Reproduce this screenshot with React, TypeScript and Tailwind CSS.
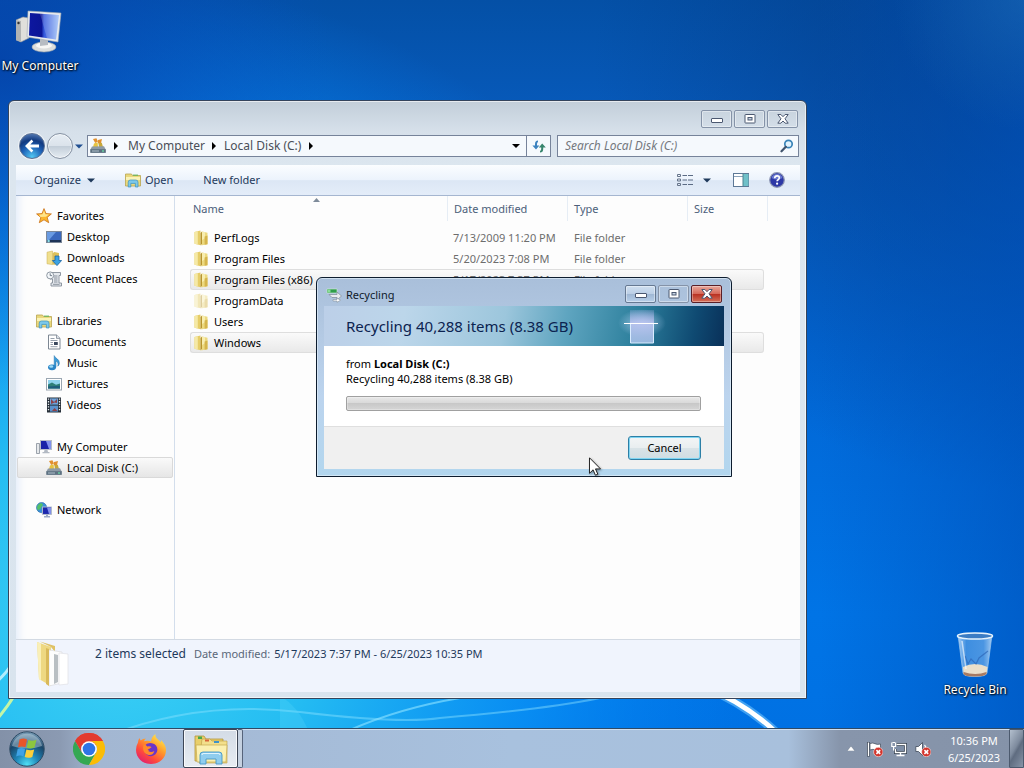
import React, { useState } from 'react';

type IconProps = { className?: string };

/* ---------- small icons (16px grid) ---------- */

const FolderIcon = ({ faded }: { faded?: boolean }) => (
    <svg viewBox="0 0 16 16" className={faded ? 'size-4 shrink-0 opacity-45' : 'size-4 shrink-0'} aria-hidden="true">
        <path d="M1.500 2 7.500 .6v14.600L1.500 13.800z" fill="#e6cd68" />
        <path d="M1.500 2 4.800 1.300v13.200l-3.300-.7z" fill="#f5e9a6" />
        <path d="M7.500 3 9 1.600v12.600l-1.500 1z" fill="#b8952f" />
        <path d="M9 1.600 14.500 2.800v11.400L9 15.200l-1.500 0 1.500-1z" fill="#ecd980" />
        <path d="M9 1.600 12 2.300v6L9 10z" fill="#f7edb0" />
        <path d="M11.600 6.400 14.500 5.400v8.800l-2.900.5z" fill="#d5b54c" />
    </svg>
);

const LibraryIcon = ({ className = 'size-4 shrink-0' }: IconProps) => (
    <svg viewBox="0 0 16 16" className={className} aria-hidden="true">
        <path d="M.5 2h6l1 1.500h8V14H.5z" fill="#e9d87c" stroke="#b9a450" strokeWidth=".8" />
        <path d="M1 5h14v3H1z" fill="#faf3b8" />
        <path d="M8 2.600h5v1.200H8z" fill="#6cb65a" />
        <path d="M3.200 15V10.200Q3.200 8 5.400 8h5.400Q13 8 13 10.200V15h-2.600v-3.600H5.800V15z" fill="#7cc8ea" stroke="#3a91c0" strokeWidth=".7" />
    </svg>
);

const StarIcon = () => (
    <svg viewBox="0 0 16 16" className="size-4 shrink-0" aria-hidden="true">
        <path d="m8 .6 2 5 5.400.3-4.200 3.500 1.500 5.300L8 11.800l-4.700 2.900 1.500-5.300L.6 5.900 6 5.600z" fill="#fbb62c" stroke="#c9711a" strokeWidth=".8" />
        <path d="m8 2.600 1.300 3.700 3.600.3-3 2.200-5.400.1L3 6.700l3.600-.4z" fill="#ffe48a" />
    </svg>
);

const DesktopIcon = () => (
    <svg viewBox="0 0 16 16" className="size-4 shrink-0" aria-hidden="true">
        <rect x=".5" y="2.500" width="15" height="11" fill="#3a68bd" stroke="#7b8798" />
        <path d="M1 3h9L3 11H1z" fill="#6a9be2" />
        <path d="M1 11h14v2H1z" fill="#1d3357" />
        <circle cx="2.600" cy="12" r="1.300" fill="#8ce0ea" />
    </svg>
);

const DownloadsIcon = () => (
    <svg viewBox="0 0 16 16" className="size-4 shrink-0" aria-hidden="true">
        <path d="M1 2.200 6.500 1v13.600L1 13.800z" fill="#f0df8e" stroke="#c8ac4e" strokeWidth=".5" />
        <path d="M6.500 3.200 8.400 2 13 3v11l-4.600.8-1.900-.2z" fill="#dcc05a" />
        <path d="M9 6h4v4.500h2.600L11 15.600l-4.600-5.100H9z" fill="#3ba2e3" stroke="#1b66a5" strokeWidth=".8" />
    </svg>
);

const RecentIcon = () => (
    <svg viewBox="0 0 16 16" className="size-4 shrink-0" aria-hidden="true">
        <path d="M4 1.500h10.500v3H13V12h2.500v3H5v-3h1.500V8H4z" fill="#e4e8ed" stroke="#848d98" strokeWidth=".9" />
        <path d="M8 5h3.500M8 7h3.500M8 9h3.500M8 11h3.500M7 13.300h6.500" stroke="#7f8994" strokeWidth=".9" />
        <circle cx="4.200" cy="4.400" r="3.500" fill="#f4f7fa" stroke="#838d99" strokeWidth=".9" />
        <path d="M4.200 2.300v2.300h1.900" fill="none" stroke="#566373" strokeWidth=".8" />
    </svg>
);

const DocumentsIcon = () => (
    <svg viewBox="0 0 16 16" className="size-4 shrink-0" aria-hidden="true">
        <path d="M2.500 1h8L14 4.400V15H2.500z" fill="#fff" stroke="#7d8793" />
        <path d="M10.500 1v3.400H14" fill="#dfe5ec" stroke="#7d8793" strokeWidth=".8" />
        <path d="M4.500 4.500h4M4.500 6.500h7M4.500 8.500H7M4.500 10.500H7M4.500 12.700h7" stroke="#8a95a3" strokeWidth=".9" />
        <path d="M8 8h3.800v3H8z" fill="#39475c" />
    </svg>
);

const MusicIcon = () => (
    <svg viewBox="0 0 16 16" className="size-4 shrink-0" aria-hidden="true">
        <path d="M8.200.6C9 3.400 13.600 4 13.400 8.200c-.1 1.400-.8 2.300-1.600 3 .8-2.600-.2-4.400-1.800-5.100v6.200H8.200z" fill="#3c9bd8" stroke="#2273ad" strokeWidth=".5" />
        <ellipse cx="6" cy="12.300" rx="4" ry="2.900" fill="#2a84c6" />
        <ellipse cx="5.200" cy="11.500" rx="2.100" ry="1.200" fill="#9edcf6" />
    </svg>
);

const PicturesIcon = () => (
    <svg viewBox="0 0 16 16" className="size-4 shrink-0" aria-hidden="true">
        <rect x=".5" y="2.500" width="15" height="11.500" fill="#fff" stroke="#9aa6b1" />
        <rect x="2" y="4" width="12" height="8.500" fill="#8fd3ee" />
        <path d="M2 8.400 6 6.600l4 2.200 4-1.400v5.100H2z" fill="#2f7f78" />
        <path d="M2 10.600 14 9.800v2.700H2z" fill="#1e5d7c" />
    </svg>
);

const VideosIcon = () => (
    <svg viewBox="0 0 16 16" className="size-4 shrink-0" aria-hidden="true">
        <rect x="1" y=".5" width="14" height="15" fill="#27303a" />
        <rect x="4" y="1.400" width="8" height="6.200" fill="#6da4dc" />
        <rect x="4" y="8.600" width="8" height="6" fill="#5b92cd" />
        <path d="m5 2 3 3 3-3v4L8.500 5.500 5 7zM6 14l2.500-3 3 3z" fill="#8d4248" />
        <path d="M2.500 1.500v13M13.500 1.500v13" stroke="#e9eef2" strokeWidth="1.300" strokeDasharray="1.300 1.300" />
    </svg>
);

const ComputerIcon = () => (
    <svg viewBox="0 0 16 16" className="size-4 shrink-0" aria-hidden="true">
        <path d="M.5 4.500h3v10h-3z" fill="#e6e9ec" stroke="#858e99" strokeWidth=".8" />
        <rect x="4.500" y="1.500" width="11" height="9" fill="#1822a8" stroke="#b6bdc8" />
        <path d="M10 2h5v8h-2z" fill="#8192ee" />
        <path d="M8.500 11h3l.5 2h1.500v1.300h-7V13H8z" fill="#b3bac4" />
    </svg>
);

const DriveIcon = ({ className = 'size-4 shrink-0' }: IconProps) => (
    <svg viewBox="0 0 16 16" className={className} aria-hidden="true">
        <path d="m3 1 3.400-.8L8 3.400 5.200 5zM8 2l4-1-1 4-3 .3z" fill="#e1902f" />
        <path d="M4 5.400 7.600 4.200 8 9H3z" fill="#e7c33f" />
        <path d="m8.400 5 3.400-.2L13 9H9z" fill="#c6a83a" />
        <path d="m2 8.500 12-.3 1.700 3.300v3.300H.4v-3.300z" fill="#8d9aa6" />
        <path d="M.4 11.200h15.300v3.600H.4z" fill="#5d7181" />
        <path d="M2 13h7" stroke="#b9c8d2" strokeWidth=".9" />
        <circle cx="13" cy="13" r=".9" fill="#67d7a4" />
    </svg>
);

const NetworkIcon = () => (
    <svg viewBox="0 0 16 16" className="size-4 shrink-0" aria-hidden="true">
        <circle cx="5.600" cy="5.600" r="5.100" fill="#3c8fda" stroke="#256aa6" strokeWidth=".6" />
        <path d="M2.400 2.400C4 .8 6.200 1 6.800 2.400S5 4.600 5 6s-2 1-3 2.600C.6 6.600.8 4 2.400 2.400z" fill="#54c169" />
        <rect x="6.500" y="5" width="9" height="7.400" fill="#1c27ad" stroke="#b6bfca" strokeWidth=".9" />
        <path d="M11 5.500h4v6.400h-2z" fill="#8290ea" />
        <path d="M10 12.800h2V14h2v1.400H8V14h2z" fill="#9ba9c6" />
    </svg>
);

const Triangle = ({ className }: IconProps) => (
    <svg viewBox="0 0 8 4" className={className} aria-hidden="true">
        <path d="M0 0h8L4 4z" fill="currentColor" />
    </svg>
);

const Crumb = () => (
    <svg viewBox="0 0 4 8" className="h-2 w-1 shrink-0 text-black" aria-hidden="true">
        <path d="M0 0v8l4-4z" fill="currentColor" />
    </svg>
);

/* ---------- window caption glyphs ---------- */

const MinGlyph = () => (
    <svg viewBox="0 0 12 12" className="size-3" aria-hidden="true">
        <rect x=".5" y="5.500" width="11" height="4" rx=".5" fill="#fff" stroke="#4b5870" />
    </svg>
);

const MaxGlyph = () => (
    <svg viewBox="0 0 12 12" className="size-3" aria-hidden="true">
        <rect x="1" y="1.500" width="10" height="8.500" rx=".5" fill="#fff" stroke="#4b5870" />
        <rect x="4" y="4.500" width="4" height="2.500" fill="#c5d2e2" stroke="#4b5870" />
    </svg>
);

const CloseGlyph = () => (
    <svg viewBox="0 0 12 12" className="size-3" aria-hidden="true">
        <path d="M.8 1.500h3.100L6 3.700l2.100-2.200h3.100L8 5.800l3.200 4.400H8.100L6 8l-2.100 2.200H.8L4 5.800z" fill="#fff" stroke="#4b5870" />
    </svg>
);

/* ---------- desktop pieces ---------- */

const Wallpaper = () => (
    <svg viewBox="0 0 1024 768" preserveAspectRatio="none" className="absolute inset-0 size-full" aria-hidden="true">
        <defs>
            <linearGradient id="wp-base" x1="0" y1="0" x2="0" y2="1">
                <stop offset="0" stopColor="#0450a6" />
                <stop offset=".15" stopColor="#075abb" />
                <stop offset=".45" stopColor="#0266d4" />
                <stop offset=".8" stopColor="#0074e6" />
                <stop offset="1" stopColor="#0070e2" />
            </linearGradient>
            <radialGradient id="wp-glow" gradientUnits="userSpaceOnUse" cx="120" cy="620" r="640">
                <stop offset="0" stopColor="#3fd3f5" />
                <stop offset=".3" stopColor="#25bdf2" />
                <stop offset=".65" stopColor="#0a93f6" stopOpacity=".8" />
                <stop offset="1" stopColor="#0080f4" stopOpacity="0" />
            </radialGradient>
            <radialGradient id="wp-shade" gradientUnits="userSpaceOnUse" cx="1024" cy="60" r="430">
                <stop offset="0" stopColor="#033a86" stopOpacity=".75" />
                <stop offset="1" stopColor="#033a86" stopOpacity="0" />
            </radialGradient>
            <linearGradient id="wp-right" x1="0" y1="0" x2="1" y2="0">
                <stop offset=".8" stopColor="#0050b8" stopOpacity="0" />
                <stop offset="1" stopColor="#0050b8" stopOpacity=".6" />
            </linearGradient>
            <radialGradient id="wp-left" gradientUnits="userSpaceOnUse" cx="0" cy="60" r="330">
                <stop offset="0" stopColor="#0442a8" stopOpacity=".9" />
                <stop offset="1" stopColor="#0650c4" stopOpacity="0" />
            </radialGradient>
            <radialGradient id="wp-ray" gradientUnits="userSpaceOnUse" cx="1024" cy="0" r="130">
                <stop offset="0" stopColor="#2d7cb8" stopOpacity=".35" />
                <stop offset="1" stopColor="#2d7cb8" stopOpacity="0" />
            </radialGradient>
        </defs>
        <rect width="1024" height="768" fill="url(#wp-base)" />
        <rect width="1024" height="768" fill="url(#wp-glow)" />
        <rect width="1024" height="768" fill="url(#wp-shade)" />
        <rect width="1024" height="768" fill="url(#wp-right)" />
        <rect width="1024" height="768" fill="url(#wp-left)" />
        <rect width="1024" height="768" fill="url(#wp-ray)" />
        <path d="M702 686Q744 702 778 734" fill="none" stroke="#7fd0ff" strokeWidth="9" opacity=".5" />
        <path d="M702 686Q744 702 778 734" fill="none" stroke="#fff" strokeWidth="5" />
        <path d="M350 730Q400 708 460 698" fill="none" stroke="#7fdcff" strokeWidth="2" opacity=".7" />
        <path d="M110 735Q200 700 300 712T440 718Q540 710 600 698" fill="none" stroke="#8be3ff" strokeWidth="2" opacity=".45" />
        <path d="M-4 682Q4 676 12 664" fill="none" stroke="#d4f6ff" strokeWidth="3" opacity=".8" />
        <path d="M-2 718Q8 706 14 696" fill="none" stroke="#c3f5a6" strokeWidth="3" />
        <path d="M280 696q18 10 28 34h-28z" fill="#6fe3ff" opacity=".2" />
    </svg>
);

const ComputerShortcut = () => (
    <button className="absolute left-0 top-[5px] flex w-20 flex-col items-center gap-[5px]">
        <svg viewBox="0 0 48 48" className="size-12" aria-hidden="true">
            <defs>
                <linearGradient id="pc-screen" x1="0" y1="0" x2="1" y2="0">
                    <stop offset="0" stopColor="#0d17a0" />
                    <stop offset=".42" stopColor="#0b1596" />
                    <stop offset=".5" stopColor="#3458dc" />
                    <stop offset="1" stopColor="#9ec0f8" />
                </linearGradient>
            </defs>
            <path d="m0 15 7-3 6 1v20l-8 4-5-2z" fill="#e0dfdb" stroke="#8f949b" strokeWidth=".6" />
            <path d="m0 15 5 1v21l-5-2z" fill="#b1b3b3" />
            <circle cx="2.500" cy="18" r="1.200" fill="#333" />
            <ellipse cx="28" cy="42" rx="12" ry="5" fill="#dcdedd" stroke="#9ba2a9" strokeWidth=".6" />
            <ellipse cx="28" cy="40.500" rx="8" ry="3" fill="#f7f7f5" />
            <path d="m24 33 8 1v6l-8 1z" fill="#b7bcc2" />
            <path d="m12 6 33 2-3 29-31-5z" fill="#e8ebee" stroke="#a0a7b1" strokeWidth=".6" />
            <path d="m14 8 29 2-3 24.500-27-4z" fill="url(#pc-screen)" />
            <path d="m24 8.700 19 1.300-3 24.500-9-1.300z" fill="#fff" opacity=".18" />
        </svg>
        <span className="whitespace-nowrap text-xs leading-4 text-white [text-shadow:1px_1px_2px_#000,0_0_2px_#000]">My Computer</span>
    </button>
);

const BinShortcut = () => (
    <button className="absolute bottom-[30px] right-[9px] flex w-20 flex-col items-center gap-1">
        <svg viewBox="0 0 48 48" className="size-12" aria-hidden="true">
            <defs>
                <linearGradient id="bin-body" x1="0" y1="0" x2="1" y2="0">
                    <stop offset="0" stopColor="#d7ecff" stopOpacity=".8" />
                    <stop offset=".25" stopColor="#5fa5e8" stopOpacity=".65" />
                    <stop offset=".75" stopColor="#7db8ef" stopOpacity=".6" />
                    <stop offset="1" stopColor="#cfe6fb" stopOpacity=".8" />
                </linearGradient>
            </defs>
            <path d="m7 5 5 38q1 3.500 12 3.500T36 43l5-38z" fill="url(#bin-body)" stroke="#9cc7ee" strokeWidth=".7" />
            <path d="M12 37q12-6 24.500 0l-1 7q-2 2.500-12 2.500T12.500 44z" fill="#eadfca" />
            <path d="M12.500 42q12 4 23 0v2q-2 2.500-12 2.500t-11-2.500z" fill="#a77a62" />
            <path d="m14 26 3 8 3-5 5 5 3-6 9-7" fill="none" stroke="#2d66b8" strokeWidth="1.200" opacity=".7" />
            <ellipse cx="24" cy="6" rx="17.500" ry="3" fill="#3b7cc4" stroke="#e5f2fc" strokeWidth="1.500" />
            <path d="m11 11 4 28" stroke="#fff" strokeWidth="1.500" opacity=".6" />
        </svg>
        <span className="whitespace-nowrap text-xs leading-4 text-white [text-shadow:1px_1px_2px_#000,0_0_2px_#000]">Recycle Bin</span>
    </button>
);

/* ---------- explorer window ---------- */

const places = [
    {
        title: 'Favorites',
        icon: <StarIcon />,
        items: [
            { label: 'Desktop', icon: <DesktopIcon /> },
            { label: 'Downloads', icon: <DownloadsIcon /> },
            { label: 'Recent Places', icon: <RecentIcon /> },
        ],
    },
    {
        title: 'Libraries',
        icon: <LibraryIcon />,
        items: [
            { label: 'Documents', icon: <DocumentsIcon /> },
            { label: 'Music', icon: <MusicIcon /> },
            { label: 'Pictures', icon: <PicturesIcon /> },
            { label: 'Videos', icon: <VideosIcon /> },
        ],
    },
    {
        title: 'My Computer',
        icon: <ComputerIcon />,
        items: [{ label: 'Local Disk (C:)', icon: <DriveIcon />, current: true }],
    },
    { title: 'Network', icon: <NetworkIcon />, items: [] },
];

type FileRow = { name: string; modified?: string; type?: string; selected?: boolean; hidden?: boolean };

const files: FileRow[] = [
    { name: 'PerfLogs', modified: '7/13/2009 11:20 PM', type: 'File folder' },
    { name: 'Program Files', modified: '5/20/2023 7:08 PM', type: 'File folder' },
    { name: 'Program Files (x86)', modified: '5/17/2023 7:37 PM', type: 'File folder', selected: true },
    { name: 'ProgramData', hidden: true },
    { name: 'Users' },
    { name: 'Windows', selected: true },
];

const captionButton =
    'flex h-[18px] w-[31px] items-center justify-center rounded-[2px] border border-[#8593a8] shadow-[inset_0_0_0_1px_#ffffff66]';

const AddressBar = () => {
    const [query, setQuery] = useState('');

    return (
        <div className="flex h-8 items-center pl-[3px] pr-px text-xs">
            <button aria-label="Back" className="flex size-[26px] shrink-0 items-center justify-center rounded-full border border-[#5a6f92] bg-[radial-gradient(circle_at_50%_95%,#52c8f2_0%,#1f63b8_40%,#123a80_65%,#6c92c8_100%)] shadow-[0_0_0_1px_#ffffff88]">
                <svg viewBox="0 0 16 16" className="size-4" aria-hidden="true">
                    <path d="M7.500 1.500 1 8l6.500 6.500 1.800-1.900L6.300 9.600H15V6.400H6.300l3-3z" fill="#fff" />
                </svg>
            </button>
            <button aria-label="Forward" className="ml-0.5 size-[26px] shrink-0 rounded-full border border-[#8591a2] bg-[linear-gradient(#e6edf4_0%,#dbe3eb_48%,#c3ced9_52%,#e6edf3_100%)] shadow-[inset_0_0_0_1px_#ffffffaa]" />
            <button aria-label="Recent locations" className="ml-0.5 flex w-2 shrink-0 justify-center">
                <Triangle className="h-[5px] w-2 text-[#214f91]" />
            </button>
            <div className="ml-1 flex h-[22px] min-w-0 flex-1 items-center border border-[#76839a] bg-[#f5f9fd] text-[#4a4f58]">
                <DriveIcon className="ml-0.5 size-4 shrink-0" />
                <span className="ml-2"><Crumb /></span>
                <button className="ml-2.5 whitespace-nowrap">My Computer</button>
                <span className="ml-[7px]"><Crumb /></span>
                <button className="ml-2 whitespace-nowrap">Local Disk (C:)</button>
                <span className="ml-2"><Crumb /></span>
                <button aria-label="Previous locations" className="ml-auto flex h-full w-5 items-center justify-center">
                    <Triangle className="h-1 w-2 text-black" />
                </button>
                <button aria-label="Refresh" className="flex h-full w-6 items-center justify-center border-l border-[#76839a]">
                    <svg viewBox="0 0 14 14" className="size-3.5" aria-hidden="true">
                        <path d="M6 1.500Q3 1.500 3 5v1.500H.4L4 10.500l3.400-4H5V5q0-1.600 1-2z" fill="#3b82bf" />
                        <path d="M8 13.500q3.200 0 3.200-3.500V8.500h2.600L10.200 4.500l-3.400 4h2.400V10q0 1.600-1.200 2z" fill="#37856d" />
                    </svg>
                </button>
            </div>
            <label className="ml-1.5 flex h-[22px] w-[242px] shrink-0 items-center border border-[#76839a] bg-[#f5f9fd] pl-[7px] pr-1">
                <input
                    type="search"
                    aria-label="Search Local Disk (C:)"
                    placeholder="Search Local Disk (C:)"
                    value={query}
                    onChange={e => setQuery(e.target.value)}
                    className="min-w-0 flex-1 bg-transparent italic outline-none placeholder:text-[#74787e]"
                />
                <svg viewBox="0 0 14 14" className="size-3.5" aria-hidden="true">
                    <circle cx="8.500" cy="5" r="3.700" fill="#e2f3fd" stroke="#3983b7" strokeWidth="1.700" />
                    <path d="M5.800 7.800 1.500 12.300" stroke="#41546d" strokeWidth="2.200" strokeLinecap="round" />
                </svg>
            </label>
        </div>
    );
};

const Toolbar = () => (
    <div className="flex h-[31px] items-center border-b border-[#a5b6d0] bg-[linear-gradient(#fbfdff_0%,#ecf3fc_50%,#dce7f5_52%,#e4edf9_100%)] pl-[18px] pr-[15px] text-[#1e395b]">
        <button className="flex items-center gap-1.5">
            Organize
            <Triangle className="h-[5px] w-2" />
        </button>
        <button className="ml-[30px] flex items-center gap-1">
            <LibraryIcon />
            Open
        </button>
        <button className="ml-[30px]">New folder</button>
        <button aria-label="Change view" className="ml-auto">
            <svg viewBox="0 0 16 14" className="h-3.5 w-4" fill="none" aria-hidden="true">
                <path d="M.5 1.500h3v2h-3zM.5 6h3v2h-3zM.5 10.500h3v2h-3z" stroke="#66748a" />
                <path d="M5.500 2.500h4.500m1 0h5M5.500 7h4.500m1 0h5M5.500 11.500h4.500m1 0h5" stroke="#5b6b84" />
            </svg>
        </button>
        <button aria-label="More view options" className="ml-2.5">
            <Triangle className="h-[5px] w-2" />
        </button>
        <button aria-label="Show the preview pane" className="ml-[22px]">
            <svg viewBox="0 0 16 14" className="h-3.5 w-4" aria-hidden="true">
                <rect x=".5" y=".5" width="15" height="13" fill="#fff" stroke="#5d7896" />
                <path d="M1 3.500h9" stroke="#8ca3bb" />
                <path d="M10 1h5.500v12H10z" fill="#6fc0c8" />
                <path d="M10 .5v13" stroke="#4d8290" />
            </svg>
        </button>
        <button aria-label="Help" className="ml-5">
            <svg viewBox="0 0 16 16" className="size-4" aria-hidden="true">
                <circle cx="8" cy="8" r="7.300" fill="#2d38a6" stroke="#8d96b3" strokeWidth="1.200" />
                <path d="M2.500 6A5.800 5.800 0 0 1 13.500 6Q8 9 2.500 6z" fill="#7f8fdf" opacity=".75" />
                <path d="M5.700 6.200Q5.800 3.900 8.100 3.900q2.200 0 2.200 1.900 0 1.200-1.200 1.900-1 .6-1 1.600" fill="none" stroke="#fff" strokeWidth="1.600" />
                <circle cx="8.100" cy="11.700" r="1.100" fill="#fff" />
            </svg>
        </button>
    </div>
);

const NavPane = () => (
    <nav className="flex w-[159px] shrink-0 flex-col gap-[21px] border-r border-[#d3deec] px-px pt-[9px] shadow-[inset_10px_0_10px_-8px_#dfeafa]">
        {places.map(group => (
            <div key={group.title}>
                <a href="#" className="flex h-[21px] items-center gap-[5px] pl-[19px]">
                    {group.icon}
                    {group.title}
                </a>
                {group.items.map(item => (
                    <a
                        key={item.label}
                        href="#"
                        className={
                            'current' in item
                                ? 'flex h-[21px] items-center gap-[5px] rounded-[2px] border border-[#d9d9d9] bg-linear-to-b from-[#fafafa] to-[#e6e6e6] pl-7'
                                : 'flex h-[21px] items-center gap-[5px] border border-transparent pl-7'
                        }
                    >
                        {item.icon}
                        {item.label}
                    </a>
                ))}
            </div>
        ))}
    </nav>
);

const selectedCell = 'border-y border-[#dedede] bg-linear-to-b from-[#fafafa] to-[#e9e9e9]';
const plainCell = 'border-y border-transparent';

const FileList = () => (
    <div className="min-w-0 flex-1 overflow-hidden pl-[15px]">
        <table className="w-[578px] table-fixed border-separate border-spacing-0 text-left">
            <colgroup>
                <col className="w-[258px]" />
                <col className="w-[120px]" />
                <col className="w-[120px]" />
                <col className="w-[76px]" />
                <col className="w-[4px]" />
            </colgroup>
            <thead>
                <tr className="h-[25px] text-[#4c607a]">
                    <th className="relative border-r border-[#e6edf5] p-0 pl-[3px] font-normal">
                        Name
                        <svg viewBox="0 0 7 4" className="absolute left-[123px] top-0.5 h-1 w-[7px]" aria-hidden="true">
                            <path d="M0 4h7L3.500 0z" fill="#7e8b9a" />
                        </svg>
                    </th>
                    <th className="border-r border-[#e6edf5] p-0 pl-1.5 font-normal">Date modified</th>
                    <th className="border-r border-[#e6edf5] p-0 pl-1.5 font-normal">Type</th>
                    <th className="p-0 pl-1.5 font-normal">Size</th>
                    <th className="border-r border-[#e6edf5] p-0" />
                </tr>
            </thead>
            <tbody>
                <tr className="h-[6px]" aria-hidden="true" />
                {files.map(file => {
                    const cell = file.selected ? selectedCell : plainCell;
                    return (
                        <tr key={file.name} className="h-[21px] whitespace-nowrap text-[#6d6d6d]">
                            <td className={`${cell} rounded-l-[3px] border-l p-0 pl-0.5 text-black`}>
                                <span className="flex items-center gap-[5px]">
                                    <FolderIcon faded={file.hidden} />
                                    {file.name}
                                </span>
                            </td>
                            <td className={`${cell} p-0 pl-[5px]`}>{file.modified}</td>
                            <td className={`${cell} p-0 pl-1.5`}>{file.type}</td>
                            <td className={`${cell} rounded-r-[3px] border-r p-0`} />
                            <td className="p-0" />
                        </tr>
                    );
                })}
            </tbody>
        </table>
    </div>
);

const DetailsPane = () => (
    <footer className="flex h-[53px] shrink-0 items-start border-t border-[#d3dae3] bg-[#f0f4fd] pl-4 text-[#1e395b]">
        <svg viewBox="0 0 48 48" className="size-12 shrink-0" aria-hidden="true">
            <path d="m5 2 14 5v39L7 39z" fill="#eed882" />
            <path d="m5 2 4 1.500v36.700L7 39z" fill="#f9efb8" />
            <path d="m8 1.500 15 4.500v6l-4-5z" fill="#dfc266" />
            <path d="m17 10 13 2v31l-13 3z" fill="#fdfdfd" stroke="#d6d6da" strokeWidth=".6" />
            <path d="m22 14 4 1v27l-4 2z" fill="#b9bfc3" />
            <path d="m27 13 9 1v30l-9 1z" fill="#fff" stroke="#dcdce0" strokeWidth=".6" />
            <path d="m14 8 3 1v37l-3-2z" fill="#d9b95a" />
        </svg>
        <p className="ml-[15px] mt-1.5 whitespace-nowrap text-xs leading-4">2 items selected</p>
        <p className="ml-2 mt-1.5 whitespace-nowrap leading-4">
            <span className="mr-1 text-[#5a6779]">Date modified:</span>
            5/17/2023 7:37 PM - 6/25/2023 10:35 PM
        </p>
    </footer>
);

const ExplorerWindow = () => (
    <section aria-label="Local Disk (C:)" className="absolute bottom-[29px] left-2 right-[217px] top-[100px] flex flex-col rounded-t-md border border-[#34445c] bg-[linear-gradient(#c2ced9_0px,#d6e0ea_30px,#dce6ef_64px,#d9e4ee_100%)] pb-1.5 pl-[7px] pr-1.5 shadow-[inset_0_0_0_1px_#ffffff99]">
        <header className="flex h-[29px] shrink-0 items-end justify-end gap-0.5 pb-0.5 pr-0.5">
            <button aria-label="Minimize" className={captionButton}><MinGlyph /></button>
            <button aria-label="Maximize" className={captionButton}><MaxGlyph /></button>
            <button aria-label="Close" className={captionButton}><CloseGlyph /></button>
        </header>
        <AddressBar />
        <div className="flex min-h-0 flex-1 flex-col pt-[3px]">
            <Toolbar />
            <div className="flex min-h-0 flex-1 bg-[#fdfdfd]">
                <NavPane />
                <FileList />
            </div>
            <DetailsPane />
        </div>
    </section>
);

/* ---------- progress dialog ---------- */

const RecyclingDialog = () => (
    <section role="dialog" aria-label="Recycling" className="absolute left-[316px] top-[277px] w-[416px] rounded-t-md border border-[#0d1c2e] bg-[linear-gradient(#a9bfda_0px,#b4cae4_60px,#bcd4ee_60%,#b2d6ee_100%)] px-[7px] pb-[7px] shadow-[inset_0_0_0_1px_#e3f0fbaa]">
        <header className="flex h-7 items-end gap-0.5 pb-[3px] pr-0.5">
            <svg viewBox="0 0 16 16" className="ml-0.5 size-4" aria-hidden="true">
                <path d="M1 2h10v4H1z" fill="#2f9e4a" stroke="#d8efdc" strokeWidth=".6" />
                <path d="M1.500 2.500h3v3h-3z" fill="#8cdc9a" />
                <path d="M3 7.500h8V5l4.500 4-4.500 4v-2.500H6z" fill="#e8ecef" stroke="#7d8996" strokeWidth=".7" />
                <path d="M7 12.500h4V11l3.500 2.200-3.500 2.200V14H7z" fill="#fff" stroke="#8c98a4" strokeWidth=".7" />
            </svg>
            <h1 className="ml-0.5 mr-auto leading-4 text-[#0f1a2b]">Recycling</h1>
            <button aria-label="Minimize" className="flex h-[18px] w-[31px] items-center justify-center rounded-[2px] border border-[#667992] bg-[linear-gradient(#cfdff0_0%,#bccfe6_48%,#9fb7d4_52%,#b8d0ea_100%)] shadow-[inset_0_0_0_1px_#ffffff66]"><MinGlyph /></button>
            <button aria-label="Maximize" disabled className={captionButton}><MaxGlyph /></button>
            <button aria-label="Close" className="flex h-[18px] w-[31px] items-center justify-center rounded-[2px] border border-[#5a1f27] bg-[linear-gradient(#e8a79b_0%,#d6695a_48%,#b93122_52%,#d5705a_100%)] shadow-[inset_0_0_0_1px_#ffffff55]"><CloseGlyph /></button>
        </header>
        <div className="relative h-10 bg-[linear-gradient(100deg,#bccfe8_0%,#bcd6ea_20%,#9cc6dc_45%,#5fa5c0_60%,#2c7f9c_78%,#0f4a72_92%,#093059_100%)] pl-[22px]">
            <p className="text-[15px] leading-10 text-[#0b2350]">Recycling 40,288 items (8.38 GB)</p>
            <svg viewBox="0 0 48 40" className="absolute right-[58px] top-0 h-10 w-12" aria-hidden="true">
                <defs>
                    <linearGradient id="beam" x1="0" y1="0" x2="0" y2="1">
                        <stop offset="0" stopColor="#b4b8ee" stopOpacity=".2" />
                        <stop offset=".4" stopColor="#bcc4f0" stopOpacity=".9" />
                        <stop offset="1" stopColor="#a4bfe6" stopOpacity=".9" />
                    </linearGradient>
                    <radialGradient id="beam-glow">
                        <stop offset="0" stopColor="#c9dcff" stopOpacity=".7" />
                        <stop offset="1" stopColor="#c9dcff" stopOpacity="0" />
                    </radialGradient>
                </defs>
                <ellipse cx="24" cy="17" rx="24" ry="14" fill="url(#beam-glow)" />
                <rect x="12" y="4" width="24" height="33" fill="url(#beam)" />
                <path d="M12.500 17v20h23V17" fill="none" stroke="#d9ecff" />
                <path d="M6 17.500h34" stroke="#fff" strokeWidth="1.200" />
            </svg>
        </div>
        <div className="h-20 bg-white pl-[22px] pr-[23px] pt-2.5">
            <p className="leading-[15px]">from <b className="font-bold">Local Disk (C:)</b></p>
            <p className="leading-[15px]">Recycling 40,288 items (8.38 GB)</p>
            <div role="progressbar" aria-label="Recycling progress" className="mt-2.5 h-[15px] rounded-[2px] border border-[#a0a0a0] bg-[linear-gradient(#e8e8e8_0%,#dadada_45%,#c8c8c8_50%,#d6d6d6_100%)] shadow-[inset_0_0_0_1px_#ffffff44]" />
        </div>
        <div className="flex h-[43px] items-center justify-end border-t border-[#dfdfdf] bg-[#f0f0f0] pr-[23px]">
            <button className="h-6 w-[73px] rounded-[3px] border border-[#2d7fa6] bg-[linear-gradient(#f3f5f6_0%,#e9eef0_48%,#d9e3e7_52%,#cfdde3_100%)] shadow-[inset_0_0_0_1px_#7fd5f2]">Cancel</button>
        </div>
    </section>
);

/* ---------- taskbar ---------- */

const StartOrb = () => (
    <svg viewBox="0 0 36 36" className="size-9" aria-hidden="true">
        <defs>
            <radialGradient id="orb" cx=".5" cy=".95" r=".95">
                <stop offset="0" stopColor="#4fe0f5" />
                <stop offset=".35" stopColor="#1f86b8" />
                <stop offset=".7" stopColor="#1a4568" />
                <stop offset="1" stopColor="#7fa3bd" />
            </radialGradient>
        </defs>
        <circle cx="18" cy="18" r="17.200" fill="url(#orb)" stroke="#2e4a63" strokeWidth="1" />
        <path d="M3 15a15.300 15.300 0 0 1 30 0Q18 20 3 15z" fill="#dcebf3" opacity=".4" />
        <path d="M10.500 8.500q4-2 7.500 0l-1.600 7.800q-3.600-1.800-7.400 0z" fill="#e8562a" />
        <path d="M19.300 9q3.700 1.700 8.200-.2l-2 7.800q-4 1.700-7.800.2z" fill="#8dc63f" />
        <path d="M8.700 17.800q3.800-1.800 7.400 0l-1.700 7.600q-3.500-1.700-7.200 0z" fill="#3fa2e6" />
        <path d="M17.400 18.400q4 1.600 7.800 0l-1.900 7.500q-3.900 1.800-7.600.2z" fill="#fbcf3b" />
    </svg>
);

const ChromeIcon = () => (
    <svg viewBox="0 0 32 32" className="size-8" aria-hidden="true">
        <path d="M16 16 2.140 8A16 16 0 0 1 29.860 8z" fill="#ea4335" />
        <path d="M2.140 8A16 16 0 0 0 16 32l6.930-12L16 16 9.070 20z" fill="#34a853" />
        <path d="M29.860 8A16 16 0 0 1 16 32l6.930-12A8 8 0 0 0 16 8z" fill="#fbbc05" />
        <path d="M2.140 8A16 16 0 0 1 29.860 8H16a8 8 0 0 0-6.930 12z" fill="#e33b2e" />
        <circle cx="16" cy="16" r="7.800" fill="#fff" />
        <circle cx="16" cy="16" r="6.300" fill="#2f74e6" />
    </svg>
);

const FirefoxIcon = () => (
    <svg viewBox="0 0 32 32" className="size-8" aria-hidden="true">
        <defs>
            <linearGradient id="fx" x1=".8" y1=".1" x2=".2" y2=".95">
                <stop offset="0" stopColor="#ffe14a" />
                <stop offset=".35" stopColor="#ff9a2b" />
                <stop offset=".7" stopColor="#ff4a3c" />
                <stop offset="1" stopColor="#e2206e" />
            </linearGradient>
        </defs>
        <path d="M20.500 1q-.6 3 2.200 5.300 2 1.600 3.200 3.200.3-1.500 0-2.600 5.100 4.600 5.100 10.400C31 25 24.500 31 16 31S1 24.800 1 17q0-4.300 2-7.600.1-2.600 1.600-4.400.2 1.500 1.100 2.400Q7.800 5.600 11 5.400q-1.600 1.200-1.900 2.800 4.200-1.200 7 .4Q16.300 3.600 20.500 1z" fill="url(#fx)" />
        <path d="M9.500 13q2.600-3.600 7.300-2.700 5.600 1.200 5.600 6.700a6.600 6.600 0 0 1-13.100.7Q12 19.400 14.600 17q-3.200-.1-5.100-4z" fill="#6b35c9" />
        <path d="M8.600 11.600q2.400.3 3.700 1.800 2.700-.6 4.300.7-1.500 2-4 2.300.5 2.400 3 2.600 2.100.1 3.700-1-.9 4.500-5.600 4-5-.9-5.600-6-.1-2.200.5-4.400z" fill="#ff8a2a" />
    </svg>
);

const ExplorerTaskIcon = () => (
    <svg viewBox="0 0 34 32" className="h-8 w-[34px]" aria-hidden="true">
        <path d="M1 3h9l2 3h17v22H1z" fill="#e9cf6a" stroke="#b3943c" strokeWidth=".8" />
        <path d="M4 3.500h4V6H4z" fill="#4aa84a" />
        <path d="M8 6h8l2 2h15v22H5z" fill="#f3df8b" stroke="#b99b44" strokeWidth=".6" />
        <path d="M11 6.500h4v2h-4z" fill="#d8663a" />
        <path d="M20 8h5v2h-5z" fill="#3f93c9" />
        <path d="M2 12h31l-1 17H3z" fill="#fbf0b0" stroke="#c6a94f" strokeWidth=".7" />
        <path d="M6 31V22q0-3 3-3h16q3 0 3 3v9h-6v-5H12v5z" fill="#8fcdee" stroke="#4597c6" strokeWidth=".9" />
        <path d="M8 22q0-1.500 1.500-1.500h15q1.500 0 1.500 1.500" fill="none" stroke="#dff4fd" strokeWidth="1.200" />
    </svg>
);

const TrayBadge = () => (
    <>
        <circle cx="11.300" cy="11" r="4.700" fill="#d3342c" stroke="#fbe9e7" strokeWidth=".6" />
        <path d="m9.400 9.100 3.800 3.800m0-3.800-3.800 3.800" stroke="#fff" strokeWidth="1.600" />
    </>
);

const Taskbar = () => (
    <footer className="relative flex h-10 shrink-0 items-center border-t border-[#2f4a66] bg-[linear-gradient(90deg,#8391a8_0px,#8b9ab2_60px,#a3b7d2_100px,#a8c1de_50%,#a8c0dc_77%,#8795ab_82%,#8593a9_100%)] shadow-[inset_0_1px_0_#cfdff0]">
        <button aria-label="Start" className="ml-[9px]"><StartOrb /></button>
        <button aria-label="Google Chrome" className="ml-7"><ChromeIcon /></button>
        <button aria-label="Firefox" className="ml-[30px]"><FirefoxIcon /></button>
        <div className="ml-4 flex h-full">
            <button aria-label="Windows Explorer" className="flex h-full w-[55px] items-center justify-center rounded-[2px] border border-[#3d4656] bg-[linear-gradient(#d3dbe6,#e8edf2)] shadow-[inset_0_0_0_1px_#ffffffcc]">
                <ExplorerTaskIcon />
            </button>
            <span className="w-[5px] rounded-r-[2px] border-y border-r border-[#56647a] bg-[#c5d1e0]" />
        </div>
        <div className="ml-auto flex items-center">
            <button aria-label="Show hidden icons">
                <svg viewBox="0 0 8 5" className="h-[5px] w-2" aria-hidden="true">
                    <path d="M0 5h8L4 0z" fill="#fff" stroke="#56657c" strokeWidth=".4" />
                </svg>
            </button>
            <button aria-label="Action Center" className="ml-3">
                <svg viewBox="0 0 16 16" className="size-4" aria-hidden="true">
                    <path d="M1.500 1v14.500" stroke="#3c4858" strokeWidth="3" />
                    <path d="M1.500 1.500v13.500" stroke="#fff" strokeWidth="1.400" />
                    <path d="M3 2.500q3-1 5 .2t5.500.3v6q-3 .8-5.200-.2T3 9z" fill="#fff" stroke="#3c4858" strokeWidth=".7" />
                    <TrayBadge />
                </svg>
            </button>
            <button aria-label="Network" className="ml-2">
                <svg viewBox="0 0 16 16" className="size-4" aria-hidden="true">
                    <path d="M5.500 3.500h9v8h-10V8" fill="#7e8ea6" stroke="#2e3a49" strokeWidth="2.800" />
                    <path d="M5.500 3.500h9v8h-10V8M9.500 12v2.500m-4 0h8" fill="none" stroke="#fff" strokeWidth="1.400" />
                    <path d="M.8 1.500v4h3.800v-4M1.500 1.500h2.500M2.600 5.500V9.500" fill="none" stroke="#fff" strokeWidth="1.200" />
                </svg>
            </button>
            <button aria-label="Speakers" className="ml-2">
                <svg viewBox="0 0 16 16" className="size-4" aria-hidden="true">
                    <path d="M.8 5.500h2.700L7.500 1.500v13l-4-4H.8z" fill="#fff" stroke="#3c4858" strokeWidth=".8" />
                    <path d="M9.500 4q1.500 1.500 1.500 4" fill="none" stroke="#fff" strokeWidth="1.200" />
                    <TrayBadge />
                </svg>
            </button>
            <button className="flex w-[78px] flex-col items-center whitespace-nowrap pl-2 leading-[17px] text-white">
                <span>10:36 PM</span>
                <span>6/25/2023</span>
            </button>
        </div>
        <button aria-label="Show desktop" className="h-full w-[15px] rounded-[1px] border border-[#4c5a6e] bg-[linear-gradient(120deg,#b3bfce_0%,#7d8a9d_45%,#5f6c80_55%,#8794a7_100%)]" />
    </footer>
);

const Cursor = () => (
    <svg viewBox="0 0 12 19" className="pointer-events-none absolute left-[589px] top-[457px] h-[19px] w-3 drop-shadow-[1px_1px_1px_#00000066]" aria-hidden="true">
        <path d="M.5.8v15.500l3.600-3.500 2.300 5.400 2.400-1-2.300-5.300h5z" fill="#fff" stroke="#111" strokeWidth=".9" />
    </svg>
);

export default function App() {
    return (
        <div className="relative flex h-screen flex-col overflow-hidden bg-[#0a5cc4] text-[11px] leading-4 text-black [font-family:'Noto_Sans','Open_Sans',sans-serif]">
            <Wallpaper />
            <main className="relative flex-1">
                <ComputerShortcut />
                <BinShortcut />
                <ExplorerWindow />
                <RecyclingDialog />
                <Cursor />
            </main>
            <Taskbar />
        </div>
    );
}
